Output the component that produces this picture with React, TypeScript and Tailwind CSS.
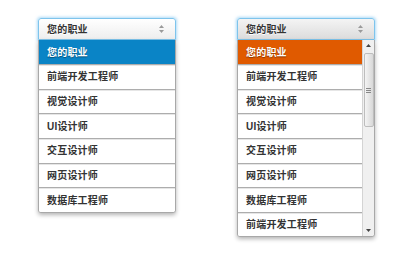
import React from "react";

const jobs = ["前端开发工程师", "视觉设计师", "UI设计师", "交互设计师", "网页设计师", "数据库工程师"];

function Arrows() {
  return (
    <svg width="7" height="10" viewBox="0 0 7 10" className="shrink-0">
      <path d="M3.5 1 L6 4 L1 4 Z" fill="#9a9a9a" />
      <path d="M3.5 9 L6 6 L1 6 Z" fill="#9a9a9a" />
    </svg>
  );
}

function Header({ dark }: { dark?: boolean }) {
  return (
    <div
      className={`flex h-[22px] items-center justify-between rounded-t-[3px] border border-[#7ec4ec] pl-[8px] pr-[10px] shadow-[0_0_3px_1px_rgba(110,190,240,0.55)] ${
        dark ? "bg-gradient-to-b from-[#f4f4f4] to-[#dcdcdc]" : "bg-gradient-to-b from-white to-[#eeeeee]"
      }`}
    >
      <span className="text-[10px] font-bold tracking-[0.2px] text-[#333] [text-shadow:0_1px_0_#fff]">您的职业</span>
      <Arrows />
    </div>
  );
}

function Row({ label }: { label: string }) {
  return (
    <div className="flex h-[24.67px] items-center border-t border-[#adadad] bg-white pl-[8px] text-[10px] font-bold tracking-[0.2px] text-[#333] shadow-[inset_0_1px_0_#e6e6e6]">
      {label}
    </div>
  );
}

export default function App() {
  return (
    <div className="flex h-[258px] w-[418px] gap-[61px] bg-white pl-[38px] pt-[18px] font-['Liberation_Sans','Noto_Sans_CJK_SC',sans-serif]">
      {/* left select */}
      <div className="w-[138px]">
        <Header />
        <div className="overflow-hidden rounded-b-[3px] border border-t-0 border-[#a8a8a8] shadow-[0_2px_4px_rgba(0,0,0,0.3)]">
          <div className="flex h-[24px] items-center bg-[#0a84c6] pl-[8px] text-[10px] font-bold tracking-[0.2px] text-white [text-shadow:0_1px_1px_rgba(0,0,0,0.4)]">
            您的职业
          </div>
          {jobs.map((j) => (
            <Row key={j} label={j} />
          ))}
        </div>
      </div>

      {/* right select with scrollbar */}
      <div className="w-[138px]">
        <Header dark />
        <div className="flex h-[197px] overflow-hidden rounded-b-[3px] border border-t-0 border-[#a8a8a8] shadow-[0_2px_4px_rgba(0,0,0,0.3)]">
          <div className="flex-1">
            <div className="flex h-[24px] items-center bg-[#e05a00] pl-[8px] text-[10px] font-bold tracking-[0.2px] text-white [text-shadow:0_1px_1px_rgba(0,0,0,0.4)]">
              您的职业
            </div>
            {[...jobs, "前端开发工程师"].map((j, i) => (
              <Row key={i} label={j} />
            ))}
          </div>
          <div className="flex w-[12px] flex-col items-center border-l border-[#d4d4d4] bg-[#f0f0f0]">
            <svg width="7" height="12" viewBox="0 0 7 12" className="shrink-0">
              <path d="M3.5 4 L6 7 L1 7 Z" fill="#444" />
            </svg>
            <div className="mt-[1px] flex h-[74px] w-[10px] items-center justify-center rounded-[2px] border border-[#bdbdbd] bg-gradient-to-r from-[#f4f4f4] to-[#d8d8d8]">
              <div className="flex flex-col gap-[1px]">
                <div className="h-[1px] w-[5px] bg-[#888]" />
                <div className="h-[1px] w-[5px] bg-[#888]" />
                <div className="h-[1px] w-[5px] bg-[#888]" />
              </div>
            </div>
            <div className="flex-1" />
            <svg width="7" height="12" viewBox="0 0 7 12" className="shrink-0">
              <path d="M3.5 8 L6 5 L1 5 Z" fill="#444" />
            </svg>
          </div>
        </div>
      </div>
    </div>
  );
}
